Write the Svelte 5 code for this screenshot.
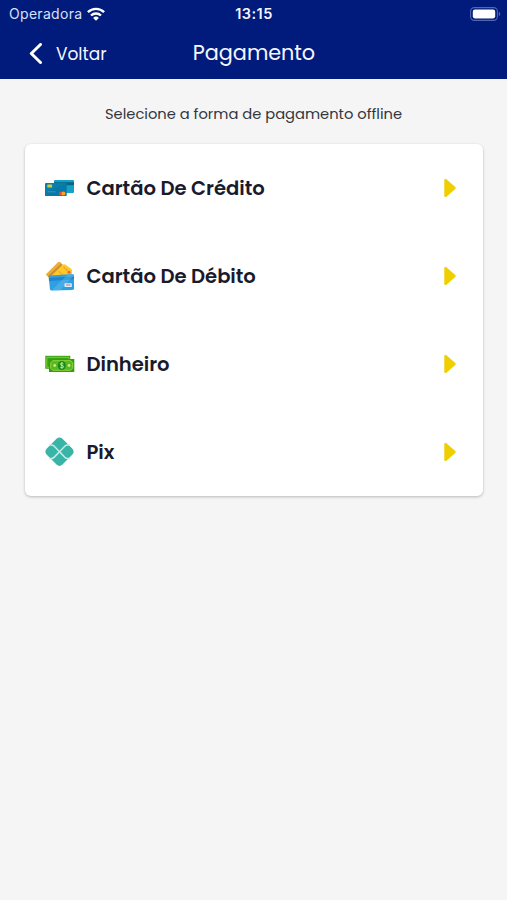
<script lang="ts">
    const methods = [
        { id: 'credit', label: 'Cartão De Crédito' },
        { id: 'debit', label: 'Cartão De Débito' },
        { id: 'cash', label: 'Dinheiro' },
        { id: 'pix', label: 'Pix' }
    ];

    let selected = $state('');
</script>

<main>
    <header>
        <div class="status">
            <div class="carrier">
                <span>Operadora</span>
                <svg width="18" height="14" viewBox="0 0 18 14" fill="none" stroke="#fff" stroke-width="2.4">
                    <path d="M.9 5.2a11.6 11.6 0 0 1 16.2 0" />
                    <path d="M4 8.5a7.3 7.3 0 0 1 10 0" />
                    <path d="M9 13.8 6.1 10.9a4.2 4.2 0 0 1 5.8 0z" fill="#fff" stroke="none" />
                </svg>
            </div>
            <span class="time">13:15</span>
            <svg class="battery" width="31" height="14" viewBox="0 0 31 14">
                <rect x=".6" y=".6" width="26.8" height="12.8" rx="3.8" fill="none" stroke="#5267b0" stroke-width="1.1" />
                <rect x="2.8" y="2.6" width="22.4" height="8.8" rx="2.1" fill="#fff" />
                <path d="M28.8 4.8c2 .8 2 3.6 0 4.4z" fill="#5267b0" />
            </svg>
        </div>
        <nav>
            <button class="back">
                <svg width="14" height="22" viewBox="0 0 14 22" fill="none" stroke="#fff" stroke-width="3" stroke-linecap="round" stroke-linejoin="round">
                    <path d="M11.5 1.5 2.3 10.5l9.2 9" />
                </svg>
                <span>Voltar</span>
            </button>
            <h1>Pagamento</h1>
        </nav>
    </header>

    <p>Selecione a forma de pagamento offline</p>

    <div class="card">
        {#each methods as method}
            <button class="method" onclick={() => (selected = method.id)}>
                <svg class="icon" width="30" height="30" viewBox="0 0 30 30">
                    {#if method.id === 'credit'}
                        <rect x="9" y="7" width="20" height="13" rx="1" fill="#16a0c8" />
                        <path d="M9 9.2h20v3H9z" fill="#086683" />
                        <rect x="0" y="10" width="21.5" height="13" rx="1" fill="#087fae" />
                        <path d="M0 19 21.5 11v11a1 1 0 0 1-1 1H1a1 1 0 0 1-1-1z" fill="#0879a6" />
                        <rect x="2.3" y="11.4" width="4.8" height="3.2" rx=".7" fill="#d7ca39" />
                        <path d="M2.5 18.8h8" stroke="#4a9dbd" stroke-width=".8" />
                        <circle cx="15.7" cy="20.4" r="2" fill="#e64639" />
                        <circle cx="18.4" cy="20.4" r="2" fill="#eda52f" />
                    {:else if method.id === 'debit'}
                        <path d="M.7 13.4 13 1.3q1.2-1 2.4 0L19 5 5.5 18.5z" fill="#eaab3a" />
                        <path d="M3.6 15.6 16.6 3.4" stroke="#c98a2c" stroke-width="1.5" />
                        <path d="M5 17 17.6 3.8q1.2-1 2.6-.2l6 4.2q1 .8.8 2V17z" fill="#fdc928" />
                        <path d="m18.6 6 5.6 5" stroke="#ef8d2a" stroke-width="1.2" stroke-dasharray="2 1" />
                        <path d="m13.6 10.4 4.2 3.4" stroke="#e8ae20" stroke-width="1.2" />
                        <circle cx="24" cy="11.2" r="1.5" fill="#ee6632" />
                        <path d="M5.2 14.6 27.4 13q1.6 0 1.6 1.6v12.6q0 1.6-1.6 1.7L6.6 29.6q-1.5 0-1.7-1.6L3.8 16.2q0-1.4 1.4-1.6z" fill="#2f9fe3" />
                        <path d="m3.8 17 25.2-1.6v2.8L4 20z" fill="#1f84c9" />
                        <path d="M6.6 29.6 23 13.3l4.4-.3q1.6 0 1.6 1.6L15 29.3z" fill="#67c2ed" opacity=".4" />
                        <rect x="19.5" y="22.2" width="7.3" height="3.8" rx=".5" fill="#dceef8" />
                        <path d="M21 24h4.4" stroke="#c36a83" stroke-width="1" />
                    {:else if method.id === 'cash'}
                        <path d="M.3 6.8h25v13H.3z" fill="#38a414" />
                        <path d="M1.8 8.3h22v10h-22z" fill="none" stroke="#7fce35" />
                        <path d="M4 10h25.3v13H4z" fill="#319f13" />
                        <path d="M7.7 11.7h18l2 2v5.6l-2 2h-18l-2-2v-5.6z" fill="#55b824" stroke="#8fd23c" />
                        <ellipse cx="16.8" cy="16.5" rx="4" ry="4.6" fill="#16891e" />
                        <path d="M18.4 14.6c-.8-.9-3-.8-3 .5 0 1.6 3.2.8 3.2 2.6 0 1.4-2.5 1.5-3.4.4M16.9 13.3v6.4" fill="none" stroke="#d6f29a" stroke-width=".9" />
                        <circle cx="9.7" cy="16.5" r="1.4" fill="#d1e873" />
                        <circle cx="24" cy="16.5" r="1.4" fill="#d1e873" />
                    {:else}
                        <path d="m11.5 1.8-9.7 9.8q-2.9 3.1 0 6.2l9.7 9.8q3 2.7 6 0l9.7-9.8q2.9-3.1 0-6.2l-9.7-9.8q-3-2.7-6 0z" fill="#39b5a8" />
                        <path d="M4 8h2.6q1.4 0 2.4 1l5.5 5.7L20 9q1-1 2.4-1H25M4 21.4h2.6q1.4 0 2.4-1l5.5-5.7 5.5 5.7q1 1 2.4 1H25" fill="none" stroke="#c6ebe6" stroke-width="1.5" />
                    {/if}
                </svg>
                <span class="label">{method.label}</span>
                <svg width="13" height="20" viewBox="0 0 13 20">
                    <path d="M1.6 2.2v15.6L10.4 10z" fill="#efcf00" stroke="#efcf00" stroke-width="2.6" stroke-linejoin="round" />
                </svg>
            </button>
        {/each}
    </div>
</main>

<style>
:global(body) {
    background-color: #f5f5f5;
}
main {
    min-height: 100vh;
    font-family: Poppins, Inter, 'Open Sans', sans-serif;
    font-feature-settings: 'cv11';
    color: #191b2c;
}
header {
    height: 79px;
    background-color: #001b7b;
    color: #f4f6ff;
}
.status {
    display: grid;
    grid-template-columns: 1fr auto 1fr;
    align-items: center;
    height: 27px;
    padding: 0 6px 0 9px;
    font-family: Inter, sans-serif;
    font-feature-settings: normal;
    font-size: 14px;
}
.carrier {
    display: flex;
    align-items: center;
    gap: 5px;
    letter-spacing: 0.3px;
    color: #d9e0f7;
}
.time {
    padding-right: 2px;
    font-size: 14.5px;
    font-weight: 600;
    letter-spacing: 0.5px;
}
.battery {
    justify-self: end;
}
nav {
    display: grid;
    grid-template-columns: 1fr auto 1fr;
    align-items: center;
    height: 52px;
}
button {
    display: flex;
    align-items: center;
    border: none;
    background: none;
    color: inherit;
    font: inherit;
    font-feature-settings: inherit;
    cursor: pointer;
}
.back {
    gap: 13px;
    padding: 2px 0 0 29px;
    font-size: 17px;
}
h1 {
    margin: 0;
    padding: 0 0 2px 1px;
    font-size: 20.8px;
    font-weight: 400;
    letter-spacing: -0.05px;
}
p {
    margin: 0;
    padding: 24px 0 19px;
    font-size: 14.7px;
    line-height: 22px;
    text-align: center;
    color: #34363e;
}
.card {
    margin: 0 24px 0 25px;
    border-radius: 6px;
    background-color: #fff;
    box-shadow: 0 1px 3px rgba(0, 0, 0, 0.25);
}
.method {
    width: 100%;
    height: 88px;
    padding: 0 26.5px 0 20px;
    text-align: left;
}
.label {
    flex: 1;
    margin-left: 11.5px;
    font-size: 19.6px;
    font-weight: 600;
    letter-spacing: -0.05px;
}
</style>
